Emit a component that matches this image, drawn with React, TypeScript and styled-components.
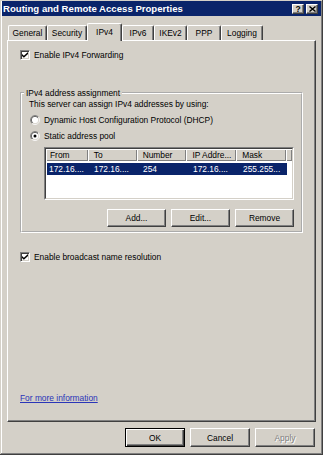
import React, { useId } from "react";
import styled, { createGlobalStyle } from "styled-components";

const GlobalStyle = createGlobalStyle`
  * { box-sizing: border-box; }
  html, body { margin: 0; padding: 0; background: #d4d0c8; }
  body {
    font-family: "Liberation Sans", Arial, sans-serif;
    font-size: 8.4px;
    line-height: 10px;
    color: #000;
  }
`;

const Window = styled.div`
  width: 323px;
  height: 455px;
  display: flex;
  flex-direction: column;
  padding: 1px 2px 0;
  background: #d4d0c8;
  box-shadow: inset -1px -1px #404040, inset 1px 1px #d4d0c8,
    inset -2px -2px #808080, inset 2px 2px #fff;
`;

const TitleBar = styled.div`
  height: 15px;
  display: flex;
  align-items: center;
  padding: 0 3px 0 1px;
  background: #0a246a;
  color: #fff;
  font-weight: bold;
  font-size: 9.6px;
`;

const TitleText = styled.span`
  flex: 1;
  white-space: nowrap;
`;

const CaptionButtons = styled.div`
  display: flex;
  gap: 2px;
`;

const CaptionButton = styled.div`
  width: 12px;
  height: 10px;
  display: flex;
  align-items: center;
  justify-content: center;
  background: #d4d0c8;
  color: #000;
  font-size: 8.5px;
  font-weight: bold;
  border-top: 1px solid #fff;
  border-left: 1px solid #fff;
  border-right: 1px solid #404040;
  border-bottom: 1px solid #404040;
  box-shadow: inset -1px -1px #808080;
`;

const Body = styled.div`
  display: flex;
  flex-direction: column;
  padding: 7px 5px 0;
`;

const TabStrip = styled.div`
  height: 17px;
  display: flex;
  align-items: flex-end;
  padding-left: 1px;
`;

const Tab = styled.div<{ $w: number; $active?: boolean }>`
  width: ${(p) => p.$w}px;
  height: ${(p) => (p.$active ? 18 : 15)}px;
  margin-bottom: ${(p) => (p.$active ? -1 : 0)}px;
  position: relative;
  z-index: ${(p) => (p.$active ? 1 : 0)};
  display: flex;
  align-items: center;
  justify-content: center;
  padding-bottom: ${(p) => (p.$active ? 2 : 0)}px;
  background: #d4d0c8;
  border-top: 1px solid #fff;
  border-left: 1px solid #fff;
  border-right: 1px solid #404040;
  border-radius: 2px 2px 0 0;
  box-shadow: inset -1px 0 #808080;
  white-space: nowrap;
`;

const Panel = styled.div`
  height: 382px;
  display: flex;
  flex-direction: column;
  padding: 8px 12px 18px;
  border-top: 1px solid #fff;
  border-left: 1px solid #fff;
  border-right: 1px solid #404040;
  border-bottom: 1px solid #404040;
  box-shadow: inset -1px -1px #808080;
`;

const CheckRow = styled.label<{ $top?: number }>`
  height: 12px;
  display: flex;
  align-items: center;
  gap: 4px;
  margin-top: ${(p) => p.$top ?? 0}px;
`;

const CheckBox = styled.span`
  width: 10px;
  height: 10px;
  display: flex;
  align-items: center;
  justify-content: center;
  background: #fff;
  border-top: 1px solid #808080;
  border-left: 1px solid #808080;
  border-right: 1px solid #fff;
  border-bottom: 1px solid #fff;
  box-shadow: inset 1px 1px #404040, inset -1px -1px #d4d0c8;
`;

const Group = styled.fieldset`
  margin: 27px 0 0;
  padding: 0;
  min-width: 0;
  border: 2px groove #fff;
`;

const Legend = styled.legend`
  margin-left: 2px;
  padding: 0 2px;
  line-height: 10px;
`;

const GroupBody = styled.div`
  display: flex;
  flex-direction: column;
  padding: 1px 7px 4px;
`;

const RadioRow = styled.label<{ $top: number }>`
  height: 12px;
  display: flex;
  align-items: center;
  gap: 4px;
  margin-top: ${(p) => p.$top}px;
  padding-left: 1px;
`;

const ListFrame = styled.div`
  height: 53px;
  margin: 5px 0 0 15px;
  border-top: 1px solid #808080;
  border-left: 1px solid #808080;
  border-right: 1px solid #fff;
  border-bottom: 1px solid #fff;
`;

const ListInner = styled.div`
  height: 100%;
  background: #fff;
  border-top: 1px solid #404040;
  border-left: 1px solid #404040;
  border-right: 1px solid #d4d0c8;
  border-bottom: 1px solid #d4d0c8;
  overflow: hidden;
`;

const HeaderRow = styled.div`
  height: 12px;
  display: flex;
`;

const HeaderCell = styled.div<{ $w?: number }>`
  ${(p) => (p.$w ? `width: ${p.$w}px;` : "flex: 1;")}
  display: flex;
  align-items: center;
  padding-left: 6px;
  background: #d4d0c8;
  box-shadow: inset 1px 1px #fff, inset -1px -1px #808080;
  white-space: nowrap;
  &:first-child {
    padding-left: 4px;
  }
`;

const ItemRow = styled.div<{ $selected?: boolean }>`
  height: 12px;
  width: 240px;
  margin: 2px 0 0 1px;
  display: flex;
  align-items: center;
  background: ${(p) => (p.$selected ? "#0a246a" : "transparent")};
  color: ${(p) => (p.$selected ? "#fff" : "#000")};
`;

const ItemCell = styled.div<{ $w: number }>`
  width: ${(p) => p.$w}px;
  padding-left: 6px;
  white-space: nowrap;
  overflow: hidden;
  &:first-child {
    padding-left: 2px;
  }
`;

const ButtonRow = styled.div<{ $top: number }>`
  display: flex;
  justify-content: flex-end;
  gap: 5px;
  margin-top: ${(p) => p.$top}px;
`;

const Button = styled.button<{ $w: number; $h: number; $default?: boolean }>`
  width: ${(p) => p.$w}px;
  height: ${(p) => p.$h}px;
  padding: 0;
  font: inherit;
  color: #000;
  background: #d4d0c8;
  border-top: 1px solid ${(p) => (p.$default ? "#000" : "#fff")};
  border-left: 1px solid ${(p) => (p.$default ? "#000" : "#fff")};
  border-right: 1px solid ${(p) => (p.$default ? "#000" : "#404040")};
  border-bottom: 1px solid ${(p) => (p.$default ? "#000" : "#404040")};
  box-shadow: ${(p) =>
    p.$default
      ? "inset 1px 1px #fff, inset -1px -1px #404040, inset -2px -2px #808080"
      : "inset -1px -1px #808080"};
  &:disabled {
    color: #808080;
    text-shadow: 1px 1px #fff;
  }
`;

const Link = styled.a`
  margin-top: auto;
  align-self: flex-start;
  color: #2a35b8;
  text-decoration: underline;
  cursor: pointer;
`;

const Footer = styled.div`
  display: flex;
  justify-content: flex-end;
  gap: 5px;
  margin: 6px 1px 0 0;
`;

const Check = () => (
  <svg width="6" height="6" viewBox="0 0 7 7">
    <path d="M0 2.2 L2.2 4.4 L7 0 L7 2.4 L2.2 6.8 L0 4.6 Z" fill="#000" />
  </svg>
);

const Radio = ({ checked }: { checked?: boolean }) => {
  const id = useId().replace(/:/g, "");
  return (
    <svg width="10" height="10" viewBox="0 0 12 12">
      <defs>
        <linearGradient id={`o${id}`} x1="0" y1="0" x2="1" y2="1">
          <stop offset="0.5" stopColor="#808080" />
          <stop offset="0.5" stopColor="#fff" />
        </linearGradient>
        <linearGradient id={`i${id}`} x1="0" y1="0" x2="1" y2="1">
          <stop offset="0.5" stopColor="#404040" />
          <stop offset="0.5" stopColor="#d4d0c8" />
        </linearGradient>
      </defs>
      <circle cx="6" cy="6" r="5.5" fill="none" stroke={`url(#o${id})`} />
      <circle cx="6" cy="6" r="4.5" fill="#fff" stroke={`url(#i${id})`} />
      {checked && <circle cx="6" cy="6" r="1.8" fill="#000" />}
    </svg>
  );
};

const CloseGlyph = () => (
  <svg width="7" height="6" viewBox="0 0 7 6">
    <path d="M0.5 0.5 L6.5 5.5 M6.5 0.5 L0.5 5.5" stroke="#000" strokeWidth="1.4" />
  </svg>
);

const tabs = [
  { name: "General", w: 39 },
  { name: "Security", w: 40 },
  { name: "IPv4", w: 35, active: true },
  { name: "IPv6", w: 32 },
  { name: "IKEv2", w: 33 },
  { name: "PPP", w: 34 },
  { name: "Logging", w: 42 },
];

const columns = [
  { title: "From", w: 42, value: "172.16...." },
  { title: "To", w: 49, value: "172.16...." },
  { title: "Number", w: 50, value: "254" },
  { title: "IP Addre...", w: 50, value: "172.16...." },
  { title: "Mask", w: 50, value: "255.255..." },
];

export default function App() {
  return (
    <>
      <GlobalStyle />
      <Window>
        <TitleBar>
          <TitleText>Routing and Remote Access Properties</TitleText>
          <CaptionButtons>
            <CaptionButton>?</CaptionButton>
            <CaptionButton>
              <CloseGlyph />
            </CaptionButton>
          </CaptionButtons>
        </TitleBar>
        <Body>
          <TabStrip>
            {tabs.map((t) => (
              <Tab key={t.name} $w={t.w} $active={t.active}>
                {t.name}
              </Tab>
            ))}
          </TabStrip>
          <Panel>
            <CheckRow>
              <CheckBox>
                <Check />
              </CheckBox>
              Enable IPv4 Forwarding
            </CheckRow>
            <Group>
              <Legend>IPv4 address assignment</Legend>
              <GroupBody>
                <div>This server can assign IPv4 addresses by using:</div>
                <RadioRow $top={5}>
                  <Radio />
                  Dynamic Host Configuration Protocol (DHCP)
                </RadioRow>
                <RadioRow $top={4}>
                  <Radio checked />
                  Static address pool
                </RadioRow>
                <ListFrame>
                  <ListInner>
                    <HeaderRow>
                      {columns.map((c) => (
                        <HeaderCell key={c.title} $w={c.w}>
                          {c.title}
                        </HeaderCell>
                      ))}
                      <HeaderCell />
                    </HeaderRow>
                    <ItemRow $selected>
                      {columns.map((c, i) => (
                        <ItemCell key={c.title} $w={i === 0 ? c.w - 1 : c.w}>
                          {c.value}
                        </ItemCell>
                      ))}
                    </ItemRow>
                  </ListInner>
                </ListFrame>
                <ButtonRow $top={9}>
                  <Button $w={59} $h={18}>Add...</Button>
                  <Button $w={59} $h={18}>Edit...</Button>
                  <Button $w={59} $h={18}>Remove</Button>
                </ButtonRow>
              </GroupBody>
            </Group>
            <CheckRow $top={18}>
              <CheckBox>
                <Check />
              </CheckBox>
              Enable broadcast name resolution
            </CheckRow>
            <Link>For more information</Link>
          </Panel>
          <Footer>
            <Button $w={60} $h={19} $default>OK</Button>
            <Button $w={60} $h={19}>Cancel</Button>
            <Button $w={60} $h={19} disabled>Apply</Button>
          </Footer>
        </Body>
      </Window>
    </>
  );
}
